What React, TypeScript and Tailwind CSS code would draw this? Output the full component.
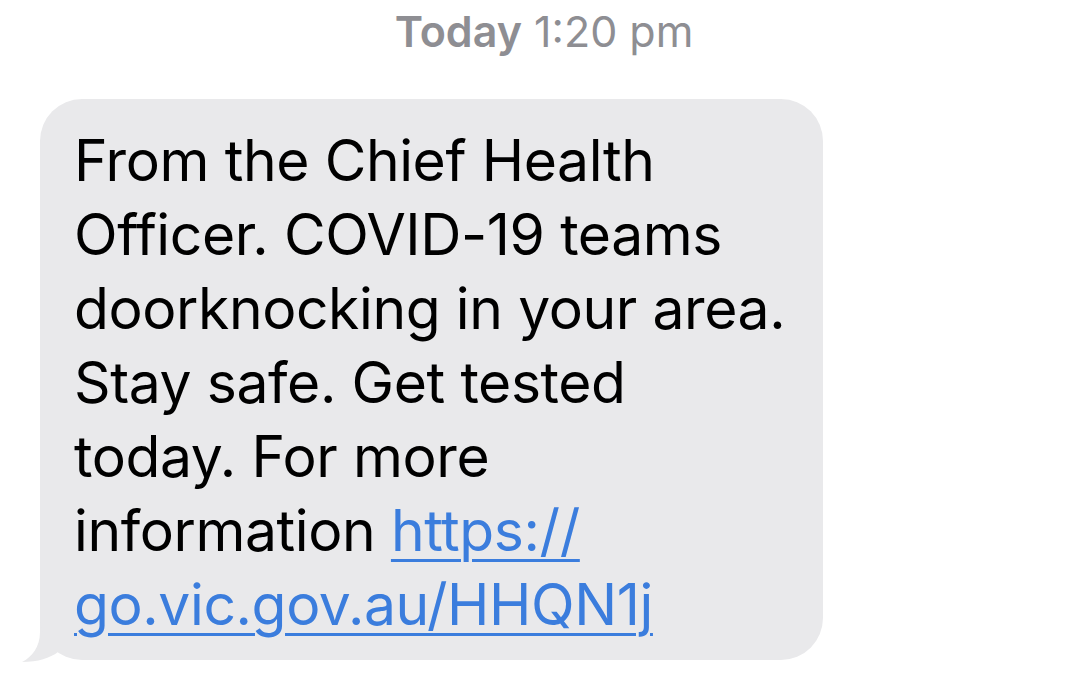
export default function App() {
  return (
    <div
      className="w-[1080px] h-[680px] bg-white overflow-hidden"
      style={{ fontFamily: "Inter, 'Noto Sans', sans-serif" }}
    >
      <div className="pt-[4px] h-[99px] text-center text-[43px] leading-[54px] text-[#8e8e93] pl-[8px]">
        <span className="font-semibold">Today</span> 1:20 pm
      </div>

      <div className="relative ml-[40px] w-[783px] h-[561px]">
        {/* tail */}
        <svg
          className="absolute left-[-20px] bottom-[-2px]"
          width="80"
          height="60"
          viewBox="0 0 80 60"
        >
          <path
            d="M20 0 L20 30 C20 45 12 55 2 60 C18 60 30 56 38 50 C45 53 52 54 60 54 L60 0 Z"
            fill="#e9e9eb"
          />
        </svg>
        <div className="relative h-full rounded-[42px] bg-[#e9e9eb] pl-[34px] pt-[25px] text-[57px] leading-[74px] text-black tracking-[-0.4px]">
          <div>From the Chief Health</div>
          <div>Officer. COVID-19 teams</div>
          <div>doorknocking in your area.</div>
          <div>Stay safe. Get tested</div>
          <div>today. For more</div>
          <div>
            information{" "}
            <span className="text-[#3b7ddd] underline decoration-[3px] underline-offset-[8px]">
              https://
            </span>
          </div>
          <div>
            <span className="text-[#3b7ddd] underline decoration-[3px] underline-offset-[8px]">
              go.vic.gov.au/HHQN1j
            </span>
          </div>
        </div>
      </div>
    </div>
  );
}
